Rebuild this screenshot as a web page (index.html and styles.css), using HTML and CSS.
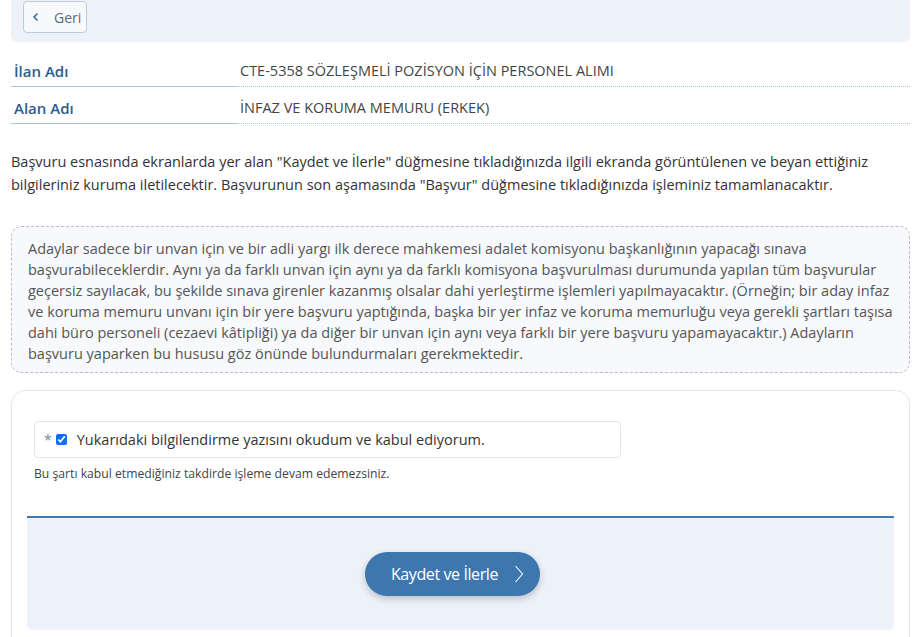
FILE: index.html
```html
<!DOCTYPE html>
<html lang="tr">
<head>
<meta charset="utf-8">
<title>Başvuru</title>
<link rel="stylesheet" href="styles.css">
</head>
<body>
<div class="page">
  <div class="topbar">
    <button class="back-btn" type="button">
      <svg class="back-icon" width="8" height="10" viewBox="0 0 8 10"><path d="M5.5 1.5 L2 5 L5.5 8.5" fill="none" stroke="#2f5f93" stroke-width="1.4"/></svg>
      <span>Geri</span>
    </button>
  </div>

  <div class="info">
    <div class="info-row">
      <div class="info-label">İlan Adı</div>
      <div class="info-value">CTE-5358 SÖZLEŞMELİ POZİSYON İÇİN PERSONEL ALIMI</div>
    </div>
    <div class="info-row">
      <div class="info-label">Alan Adı</div>
      <div class="info-value">İNFAZ VE KORUMA MEMURU (ERKEK)</div>
    </div>
  </div>

  <p class="intro">Başvuru esnasında ekranlarda yer alan "Kaydet ve İlerle" düğmesine tıkladığınızda ilgili ekranda görüntülenen ve beyan ettiğiniz bilgileriniz kuruma iletilecektir. Başvurunun son aşamasında "Başvur" düğmesine tıkladığınızda işleminiz tamamlanacaktır.</p>

  <div class="notice">Adaylar sadece bir unvan için ve bir adli yargı ilk derece mahkemesi adalet komisyonu başkanlığının yapacağı sınava başvurabileceklerdir. Aynı ya da farklı unvan için aynı ya da farklı komisyona başvurulması durumunda yapılan tüm başvurular geçersiz sayılacak, bu şekilde sınava girenler kazanmış olsalar dahi yerleştirme işlemleri yapılmayacaktır. (Örneğin; bir aday infaz ve koruma memuru unvanı için bir yere başvuru yaptığında, başka bir yer infaz ve koruma memurluğu veya gerekli şartları taşısa dahi büro personeli (cezaevi kâtipliği) ya da diğer bir unvan için aynı veya farklı bir yere başvuru yapamayacaktır.) Adayların başvuru yaparken bu hususu göz önünde bulundurmaları gerekmektedir.</div>

  <div class="card">
    <div class="card-body">
      <label class="agree">
        <span class="req">*</span>
        <input class="agree-check" type="checkbox" checked>
        <span class="agree-text">Yukarıdaki bilgilendirme yazısını okudum ve kabul ediyorum.</span>
      </label>
      <div class="help">Bu şartı kabul etmediğiniz takdirde işleme devam edemezsiniz.</div>
    </div>
    <div class="card-footer">
      <button class="save-btn" type="button">
        <span>Kaydet ve İlerle</span>
        <svg class="save-icon" width="10" height="20" viewBox="0 0 10 20"><path d="M1.5 2 L8.5 10 L1.5 18" fill="none" stroke="#ffffff" stroke-width="1.1"/></svg>
      </button>
    </div>
  </div>
</div>
</body>
</html>
```

FILE: styles.css
```css
* { box-sizing: border-box; }
html, body { margin: 0; padding: 0; background: #ffffff; }
body {
  font-family: "Open Sans", "Noto Sans", sans-serif;
  color: #333333;
  font-size: 14px;
}
.page {
  padding: 0 3px 0 11px;
}
.topbar {
  background: #edf1f8;
  height: 42px;
  border-radius: 0 0 6px 6px;
  padding: 1px 12px;
}
.back-btn {
  display: flex;
  align-items: center;
  gap: 14px;
  height: 32px;
  width: 64px;
  padding: 0 0 0 8px;
  background: #f7f9fc;
  border: 1px solid #bcccdf;
  border-radius: 4px;
  font-family: "Open Sans", sans-serif;
  font-size: 14px;
  color: #5a6b80;
}
.info {
  margin-top: 8px;
}
.info-row {
  display: flex;
  height: 37px;
}
.info-label {
  width: 226px;
  flex: none;
  padding: 11px 0 0 3px;
  font-size: 15px;
  font-weight: 600;
  color: #2b5d8f;
  border-bottom: 1px solid #a8c6e2;
}
.info-value {
  flex: 1;
  padding: 11px 0 0 3px;
  font-size: 14.5px;
  color: #444444;
  border-bottom: 1px dotted #a8c6e2;
}
.intro {
  margin: 26px 0 0 0;
  line-height: 23px;
  font-size: 14.5px;
  color: #333333;
}
.notice {
  margin-top: 30px;
  background: #f7f9fc;
  border: 1px dashed #bdbdbd;
  border-radius: 10px;
  padding: 11px 16px 8px 16px;
  font-size: 14.5px;
  line-height: 21px;
  color: #555555;
}
.card {
  margin-top: 17px;
  border: 1px solid #e6e6e6;
  border-radius: 14px 14px 0 0;
  padding: 0 15px;
  height: 260px;
}
.card-body {
  padding: 30px 7px 0 7px;
  height: 125px;
}
.agree {
  display: flex;
  align-items: center;
  width: 587px;
  height: 37px;
  border: 1px solid #e6e6e6;
  border-radius: 4px;
  padding: 0 0 0 9px;
  font-size: 14.5px;
  color: #333333;
}
.req {
  color: #7a8a9c;
  font-size: 14px;
  margin-right: 3px;
}
.agree-check {
  width: 11px;
  height: 11px;
  margin: 0 10px 0 1px;
  accent-color: #0d6efd;
}
.help {
  margin-top: 7px;
  font-size: 12.2px;
  color: #444444;
}
.card-footer {
  height: 114px;
  background: #edf1f8;
  border-top: 2px solid #3c7ab5;
  border-radius: 0 0 6px 6px;
  display: flex;
  justify-content: center;
  align-items: center;
  padding-right: 16px;
}
.save-btn {
  display: flex;
  align-items: center;
  gap: 16px;
  height: 44px;
  padding: 0 16px 0 26px;
  background: #3d77ae;
  border: none;
  border-radius: 22px;
  box-shadow: 0 3px 6px rgba(30, 50, 80, 0.25);
  color: #ffffff;
  font-family: "Open Sans", sans-serif;
  font-size: 16px;
  letter-spacing: -0.4px;
}
```
